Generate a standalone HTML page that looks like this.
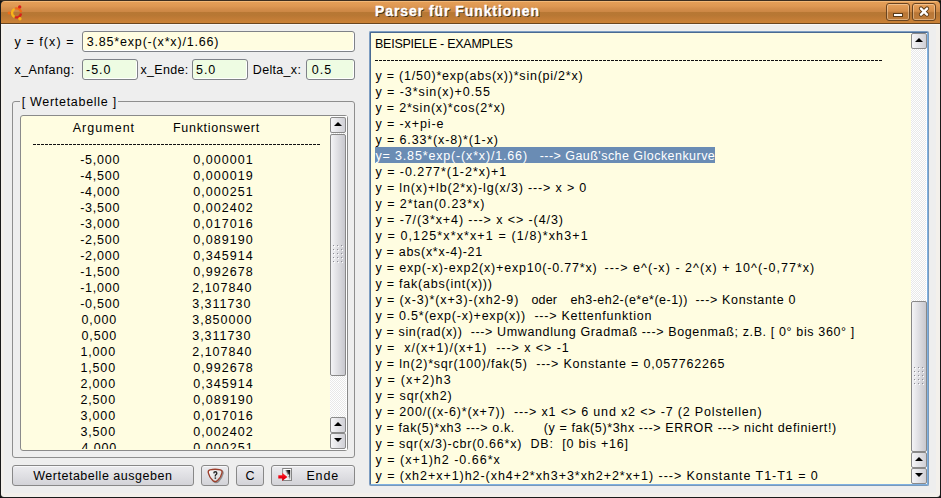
<!DOCTYPE html>
<html><head><meta charset="utf-8">
<style>
*{margin:0;padding:0;box-sizing:border-box}
html,body{width:941px;height:498px;overflow:hidden;background:#111;font-family:"Liberation Sans",sans-serif;font-size:12.5px;color:#000;position:relative}
.a{position:absolute}
.t{position:absolute;white-space:pre;line-height:16px;height:16px}
.tf{position:absolute;border:1px solid #7F8288;border-radius:3px;background:#FFFDE1;box-shadow:inset -1px -1px 0 #fff}
.tfg{background:#EEFCE3}
.btn{position:absolute;border:1px solid #888;border-radius:3px;background:linear-gradient(#ECECEF,#D3D3D8);box-shadow:inset 0 1px 0 #F8F8FA;top:465px;height:21px}
.sbtn{position:absolute;width:16px;height:16px;border:1px solid #8a8a8a;border-radius:2px;background:linear-gradient(90deg,#F6F6F8,#D0D0D6)}
.thumb{position:absolute;width:16px;border:1px solid #888;border-radius:2px;background:linear-gradient(90deg,#F4F4F6 0%,#E2E2E6 40%,#C8C8CE 100%)}
.track{position:absolute;background-color:#FFFFFF;background-image:linear-gradient(45deg,#E8E8E8 25%,transparent 25%,transparent 75%,#E8E8E8 75%),linear-gradient(45deg,#E8E8E8 25%,transparent 25%,transparent 75%,#E8E8E8 75%);background-size:2px 2px;background-position:0 0,1px 1px}
.up,.dn{position:absolute;left:2.5px;width:0;height:0;border-left:4px solid transparent;border-right:4px solid transparent}
.up{top:3.5px;border-bottom:4.5px solid #000}
.dn{top:4px;border-top:4.5px solid #000}
.dash{position:absolute;height:1px;background:repeating-linear-gradient(90deg,#111 0,#111 3px,transparent 3px,transparent 4px)}
</style></head><body>
<!-- window frame -->
<div class="a" style="left:0;top:0;width:941px;height:498px;background:#1a1a1a;border-radius:5px 5px 3px 3px"></div>
<div class="a" style="left:1px;top:24px;width:939px;height:473px;background:#F3F0EB;border-radius:0 0 3px 3px"></div>
<div class="a" style="left:4px;top:25px;width:932px;height:468px;background:#EEEEEE"></div>
<!-- title bar -->
<div class="a" style="left:0;top:0;width:941px;height:1px;background:#3C2E20;border-radius:5px 5px 0 0"></div>
<div class="a" style="left:1px;top:1px;width:939px;height:23px;border-radius:4px 4px 0 0;background:linear-gradient(#F2B878 0px,#F2B878 1px,#E49E57 1px,#DE9853 5px,#D38D4A 8px,#CC8744 11px,#B87834 11px,#B77733 14px,#C27C36 18px,#CB8236 22px,#6A4620 22px,#6A4620 23px)"></div>
<div class="a" style="left:1px;top:24px;width:939px;height:1px;background:#F7F7F7"></div>
<!-- ubuntu logo -->
<svg class="a" style="left:6px;top:3px" width="20" height="20" viewBox="0 0 20 20">
<path d="M8.49 13.87 A4.5 4.5 0 0 1 8.49 5.93" fill="none" stroke="#F8B51A" stroke-width="2.3"/><path d="M9.21 5.62 A4.5 4.5 0 0 1 15.06 9.27" fill="none" stroke="#F06A16" stroke-width="2.3"/><path d="M15.06 10.53 A4.5 4.5 0 0 1 9.21 14.18" fill="none" stroke="#D8201C" stroke-width="2.3"/>
 <circle cx="3.1" cy="9.9" r="1.5" fill="#F26A16"/>
 <circle cx="13.7" cy="3.9" r="1.7" fill="#D8201C"/>
 <circle cx="13.9" cy="15.7" r="1.7" fill="#F8B51A"/>
</svg>
<!-- title buttons -->
<div class="a" style="left:886px;top:3px;width:24px;height:18px;border:1px solid #6A4420;border-radius:3px;background:linear-gradient(#E7A15C,#D58E4A 45%,#B87636 55%,#C07D3A);box-shadow:inset 0 0 0 1px rgba(255,230,200,.45)"></div>
<div class="a" style="left:893px;top:13px;width:10px;height:4px;background:#fff;border:1px solid #5a3a18"></div>
<div class="a" style="left:912px;top:3px;width:24px;height:18px;border:1px solid #6A4420;border-radius:3px;background:linear-gradient(#E7A15C,#D58E4A 45%,#B87636 55%,#C07D3A);box-shadow:inset 0 0 0 1px rgba(255,230,200,.45)"></div>
<svg class="a" style="left:917px;top:5px" width="14" height="14" viewBox="0 0 14 14">
 <path d="M4 3.6 L10 9.6 M10 3.6 L4 9.6" stroke="#5a3a18" stroke-width="4.2" stroke-linecap="round"/>
 <path d="M4 3.6 L10 9.6 M10 3.6 L4 9.6" stroke="#fff" stroke-width="2.4" stroke-linecap="round"/>
</svg>

<!-- input fields -->
<div class="tf" style="left:82px;top:31px;width:273px;height:21px"></div>
<div class="tf tfg" style="left:82px;top:59px;width:56px;height:21px"></div>
<div class="tf tfg" style="left:192px;top:59px;width:56px;height:21px"></div>
<div class="tf tfg" style="left:306px;top:59px;width:49px;height:21px"></div>

<!-- group box -->
<div class="a" style="left:12px;top:101px;width:343px;height:357px;border:1px solid #8e8e8e;border-radius:3px"></div>
<div class="a" style="left:20px;top:95px;width:98px;height:12px;background:#EDEDED"></div>
<!-- table -->
<div class="a" style="left:20px;top:115px;width:328px;height:336px;border:1px solid #8a8a8a;border-radius:3px;background:#FFFDE1;overflow:hidden">
</div>
<div class="a" style="left:330px;top:116px;width:17px;height:334px;background:#fff"></div><div class="track" style="left:330px;top:117px;width:16px;height:332px"></div>
<div class="sbtn" style="left:330px;top:117px"><div class="up"></div></div>
<div class="thumb" style="left:330px;top:134px;height:242px"></div>
<svg class="a" style="left:333px;top:245px" width="11" height="19" viewBox="0 0 11 19"><g id="grip"><rect x="0" y="0" width="1" height="1" fill="#8E8E96"/><rect x="1" y="1" width="1" height="1" fill="#fff"/><rect x="0" y="4" width="1" height="1" fill="#8E8E96"/><rect x="1" y="5" width="1" height="1" fill="#fff"/><rect x="0" y="8" width="1" height="1" fill="#8E8E96"/><rect x="1" y="9" width="1" height="1" fill="#fff"/><rect x="0" y="12" width="1" height="1" fill="#8E8E96"/><rect x="1" y="13" width="1" height="1" fill="#fff"/><rect x="0" y="16" width="1" height="1" fill="#8E8E96"/><rect x="1" y="17" width="1" height="1" fill="#fff"/><rect x="4" y="0" width="1" height="1" fill="#8E8E96"/><rect x="5" y="1" width="1" height="1" fill="#fff"/><rect x="4" y="4" width="1" height="1" fill="#8E8E96"/><rect x="5" y="5" width="1" height="1" fill="#fff"/><rect x="4" y="8" width="1" height="1" fill="#8E8E96"/><rect x="5" y="9" width="1" height="1" fill="#fff"/><rect x="4" y="12" width="1" height="1" fill="#8E8E96"/><rect x="5" y="13" width="1" height="1" fill="#fff"/><rect x="4" y="16" width="1" height="1" fill="#8E8E96"/><rect x="5" y="17" width="1" height="1" fill="#fff"/><rect x="8" y="0" width="1" height="1" fill="#8E8E96"/><rect x="9" y="1" width="1" height="1" fill="#fff"/><rect x="8" y="4" width="1" height="1" fill="#8E8E96"/><rect x="9" y="5" width="1" height="1" fill="#fff"/><rect x="8" y="8" width="1" height="1" fill="#8E8E96"/><rect x="9" y="9" width="1" height="1" fill="#fff"/><rect x="8" y="12" width="1" height="1" fill="#8E8E96"/><rect x="9" y="13" width="1" height="1" fill="#fff"/><rect x="8" y="16" width="1" height="1" fill="#8E8E96"/><rect x="9" y="17" width="1" height="1" fill="#fff"/></g></svg>
<div class="sbtn" style="left:330px;top:417px"><div class="up"></div></div>
<div class="sbtn" style="left:330px;top:433px"><div class="dn"></div></div>
<div class="dash" style="left:33px;top:144px;width:288px"></div>

<!-- buttons -->
<div class="btn" style="left:12px;width:182px"></div>
<div class="btn" style="left:201px;width:28px"></div>
<div class="btn" style="left:236px;width:28px"></div>
<div class="btn" style="left:271px;width:84px"></div>
<!-- help icon -->
<svg class="a" style="left:206px;top:467px" width="18" height="18" viewBox="0 0 18 18">
 <defs><linearGradient id="hg" x1="0" y1="0" x2="1" y2="1"><stop offset="0" stop-color="#ffffff"/><stop offset="1" stop-color="#d2d2d2"/></linearGradient></defs><g transform="translate(0.4,0.8)">
 <path d="M3.5 2 Q8.8 0.8 14 2 Q16.2 2.6 15.6 5 Q14.6 9.5 11.2 12.8 Q8.8 14.8 6.4 12.8 Q3 9.5 1.9 5 Q1.4 2.6 3.5 2 Z" fill="none" stroke="rgba(0,0,0,.35)" stroke-width="1.6" transform="translate(0.9,0.9)"/>
 <path d="M3.5 2 Q8.8 0.8 14 2 Q16.2 2.6 15.6 5 Q14.6 9.5 11.2 12.8 Q8.8 14.8 6.4 12.8 Q3 9.5 1.9 5 Q1.4 2.6 3.5 2 Z" fill="url(#hg)" stroke="#9E402D" stroke-width="1.35"/>
 <path d="M7.4 5.6 Q7.5 4 8.9 4 Q10.4 4 10.4 5.4 Q10.4 6.3 9.5 6.8 Q8.9 7.1 8.9 8.6" fill="none" stroke="#2a2a2a" stroke-width="1.4"/>
 <rect x="8.2" y="9.6" width="1.5" height="1.4" fill="#2a2a2a"/>
</g></svg>
<!-- door icon -->
<svg class="a" style="left:276px;top:467px" width="18" height="16" viewBox="0 0 18 16">
 <defs><linearGradient id="dg" x1="0" y1="0.9" x2="1" y2="0.1"><stop offset="0" stop-color="#ffffff"/><stop offset="0.5" stop-color="#e8e8e8"/><stop offset="0.72" stop-color="#333"/><stop offset="1" stop-color="#000"/></linearGradient>
 <linearGradient id="ag" x1="0" y1="0" x2="0" y2="1"><stop offset="0" stop-color="#FF4040"/><stop offset="0.5" stop-color="#F00010"/><stop offset="1" stop-color="#C8000C"/></linearGradient></defs>
 <rect x="6.7" y="1.5" width="8.8" height="12" fill="#fff" stroke="#858585" stroke-width="1"/>
 <rect x="8.2" y="3" width="6" height="10" fill="url(#dg)"/>
 <rect x="12" y="7.6" width="1.2" height="1.2" fill="#fff"/>
 <path d="M2.3 8.2 L6.2 8.2 L6.2 5.8 L11.4 9.9 L6.2 14.1 L6.2 11.6 L2.3 11.6 Z" fill="url(#ag)"/>
</svg>

<!-- right text area -->
<div class="a" style="left:369px;top:31px;width:560px;height:455px;border:1px solid #7D9DC2;border-right-color:#7799BB;border-bottom-color:#7799BB;border-radius:2px;background:#FFFDE1"><div style="position:absolute;left:0;top:0;right:0;bottom:0;border:1px solid #4A6A92;border-right-color:#80B0E0;border-bottom-color:#80B0E0"></div></div>
<div class="a" style="left:375px;top:147px;width:340px;height:16px;background:#6A8CB4"></div>
<div class="dash" style="left:375px;top:60px;width:508px"></div>
<div class="a" style="left:911px;top:33px;width:16px;height:451px;background:#fff"></div><div class="track" style="left:911px;top:33px;width:15px;height:451px"></div>
<div class="sbtn" style="left:911px;top:33px"><div class="up"></div></div>
<div class="thumb" style="left:911px;top:301px;height:151px"></div>
<svg class="a" style="left:914px;top:367px" width="11" height="19" viewBox="0 0 11 19"><use href="#grip"/></svg>
<div class="sbtn" style="left:911px;top:452px"><div class="up"></div></div>
<div class="sbtn" style="left:911px;top:468px"><div class="dn"></div></div>

<div class="t" style="left:375.00px;top:36px;letter-spacing:-0.242px">BEISPIELE - EXAMPLES</div>
<div class="t" style="left:375.50px;top:68px;letter-spacing:0.773px">y = (1/50)*exp(abs(x))*sin(pi/2*x)</div>
<div class="t" style="left:375.50px;top:84px;letter-spacing:0.929px">y = -3*sin(x)+0.55</div>
<div class="t" style="left:375.50px;top:100px;letter-spacing:0.790px">y = 2*sin(x)*cos(2*x)</div>
<div class="t" style="left:375.50px;top:116px;letter-spacing:0.890px">y = -x+pi-e</div>
<div class="t" style="left:375.50px;top:132px;letter-spacing:0.868px">y = 6.33*(x-8)*(1-x)</div>
<div class="t" style="left:375.50px;top:148px;letter-spacing:0.835px;color:#fff">y= 3.85*exp(-(x*x)/1.66)</div>
<div class="t" style="left:539.70px;top:148px;letter-spacing:0.458px;color:#fff">---&gt; Gauß'sche Glockenkurve</div>
<div class="t" style="left:375.50px;top:164px;letter-spacing:0.958px">y = -0.277*(1-2*x)+1</div>
<div class="t" style="left:375.50px;top:180px;letter-spacing:0.843px">y = ln(x)+lb(2*x)-lg(x/3) ---&gt; x &gt; 0</div>
<div class="t" style="left:375.50px;top:196px;letter-spacing:0.969px">y = 2*tan(0.23*x)</div>
<div class="t" style="left:375.50px;top:212px;letter-spacing:0.910px">y = -7/(3*x+4) ---&gt; x &lt;&gt; -(4/3)</div>
<div class="t" style="left:375.50px;top:228px;letter-spacing:1.117px">y = 0,125*x*x*x+1 = (1/8)*xh3+1</div>
<div class="t" style="left:375.50px;top:244px;letter-spacing:0.700px">y = abs(x*x-4)-21</div>
<div class="t" style="left:375.50px;top:260px;letter-spacing:0.806px">y = exp(-x)-exp2(x)+exp10(-0.77*x)</div>
<div class="t" style="left:604.60px;top:260px;letter-spacing:1.042px">---&gt; e^(-x) - 2^(x) + 10^(-0,77*x)</div>
<div class="t" style="left:375.50px;top:276px;letter-spacing:0.774px">y = fak(abs(int(x)))</div>
<div class="t" style="left:375.50px;top:292px;letter-spacing:0.873px">y = (x-3)*(x+3)-(xh2-9)</div>
<div class="t" style="left:531.50px;top:292px;letter-spacing:0.167px">oder</div>
<div class="t" style="left:570.40px;top:292px;letter-spacing:0.478px">eh3-eh2-(e*e*(e-1))</div>
<div class="t" style="left:695.50px;top:292px;letter-spacing:0.660px">---&gt; Konstante 0</div>
<div class="t" style="left:375.50px;top:308px;letter-spacing:0.768px">y = 0.5*(exp(-x)+exp(x))  ---&gt; Kettenfunktion</div>
<div class="t" style="left:375.50px;top:324px;letter-spacing:0.633px">y = sin(rad(x))  ---&gt; Umwandlung Gradmaß ---&gt; Bogenmaß; z.B. [ 0° bis 360° ]</div>
<div class="t" style="left:375.50px;top:340px;letter-spacing:0.948px">y =  x/(x+1)/(x+1)  ---&gt; x &lt;&gt; -1</div>
<div class="t" style="left:375.50px;top:356px;letter-spacing:0.793px">y = ln(2)*sqr(100)/fak(5)  ---&gt; Konstante = 0,057762265</div>
<div class="t" style="left:375.50px;top:372px;letter-spacing:1.190px">y = (x+2)h3</div>
<div class="t" style="left:375.50px;top:388px;letter-spacing:0.891px">y = sqr(xh2)</div>
<div class="t" style="left:375.50px;top:404px;letter-spacing:0.831px">y = 200/((x-6)*(x+7))  ---&gt; x1 &lt;&gt; 6 und x2 &lt;&gt; -7 (2 Polstellen)</div>
<div class="t" style="left:375.50px;top:420px;letter-spacing:0.630px">y = fak(5)*xh3 ---&gt; o.k.       (y = fak(5)*3hx ---&gt; ERROR ---&gt; nicht definiert!)</div>
<div class="t" style="left:375.50px;top:436px;letter-spacing:0.768px">y = sqr(x/3)-cbr(0.66*x)  DB:  [0 bis +16]</div>
<div class="t" style="left:375.50px;top:452px;letter-spacing:1.000px">y = (x+1)h2 -0.66*x</div>
<div class="t" style="left:375.50px;top:468px;letter-spacing:0.952px">y = (xh2+x+1)h2-(xh4+2*xh3+3*xh2+2*x+1) ---&gt; Konstante T1-T1 = 0</div>
<div class="t" style="left:14.50px;top:34px;letter-spacing:1.078px">y = f(x) =</div>
<div class="t" style="left:86.70px;top:34px;letter-spacing:0.825px">3.85*exp(-(x*x)/1.66)</div>
<div class="t" style="left:14.50px;top:62px;letter-spacing:0.425px">x_Anfang:</div>
<div class="t" style="left:86.00px;top:62px;letter-spacing:1.000px">-5.0</div>
<div class="t" style="left:140.40px;top:62px;letter-spacing:0.317px">x_Ende:</div>
<div class="t" style="left:196.00px;top:62px;letter-spacing:0.960px">5.0</div>
<div class="t" style="left:252.80px;top:62px;letter-spacing:0.314px">Delta_x:</div>
<div class="t" style="left:311.80px;top:62px;letter-spacing:1.020px">0.5</div>
<div class="t" style="left:21.70px;top:94px;letter-spacing:0.707px">[ Wertetabelle ]</div>
<div class="t" style="left:72.70px;top:120px;letter-spacing:1.029px">Argument</div>
<div class="t" style="left:173.00px;top:120px;letter-spacing:0.700px">Funktionswert</div>
<div class="t" style="left:80.20px;top:152px;letter-spacing:0.748px">-5,000</div>
<div class="t" style="left:193.20px;top:152px;letter-spacing:1.040px">0,000001</div>
<div class="t" style="left:80.20px;top:168px;letter-spacing:0.748px">-4,500</div>
<div class="t" style="left:193.20px;top:168px;letter-spacing:1.040px">0,000019</div>
<div class="t" style="left:80.20px;top:184px;letter-spacing:0.748px">-4,000</div>
<div class="t" style="left:193.20px;top:184px;letter-spacing:1.040px">0,000251</div>
<div class="t" style="left:80.20px;top:200px;letter-spacing:0.748px">-3,500</div>
<div class="t" style="left:193.20px;top:200px;letter-spacing:1.040px">0,002402</div>
<div class="t" style="left:80.20px;top:216px;letter-spacing:0.748px">-3,000</div>
<div class="t" style="left:193.20px;top:216px;letter-spacing:1.040px">0,017016</div>
<div class="t" style="left:80.20px;top:232px;letter-spacing:0.748px">-2,500</div>
<div class="t" style="left:193.20px;top:232px;letter-spacing:1.040px">0,089190</div>
<div class="t" style="left:80.20px;top:248px;letter-spacing:0.748px">-2,000</div>
<div class="t" style="left:193.20px;top:248px;letter-spacing:1.040px">0,345914</div>
<div class="t" style="left:80.20px;top:264px;letter-spacing:0.748px">-1,500</div>
<div class="t" style="left:193.20px;top:264px;letter-spacing:1.040px">0,992678</div>
<div class="t" style="left:80.20px;top:280px;letter-spacing:0.748px">-1,000</div>
<div class="t" style="left:192.20px;top:280px;letter-spacing:1.020px">2,107840</div>
<div class="t" style="left:80.20px;top:296px;letter-spacing:0.748px">-0,500</div>
<div class="t" style="left:192.20px;top:296px;letter-spacing:1.000px">3,311730</div>
<div class="t" style="left:81.50px;top:312px;letter-spacing:0.853px">0,000</div>
<div class="t" style="left:192.20px;top:312px;letter-spacing:1.020px">3,850000</div>
<div class="t" style="left:81.50px;top:328px;letter-spacing:0.853px">0,500</div>
<div class="t" style="left:192.20px;top:328px;letter-spacing:1.000px">3,311730</div>
<div class="t" style="left:80.50px;top:344px;letter-spacing:0.825px">1,000</div>
<div class="t" style="left:192.20px;top:344px;letter-spacing:1.020px">2,107840</div>
<div class="t" style="left:80.50px;top:360px;letter-spacing:0.825px">1,500</div>
<div class="t" style="left:193.20px;top:360px;letter-spacing:1.040px">0,992678</div>
<div class="t" style="left:80.50px;top:376px;letter-spacing:0.825px">2,000</div>
<div class="t" style="left:193.20px;top:376px;letter-spacing:1.040px">0,345914</div>
<div class="t" style="left:80.50px;top:392px;letter-spacing:0.825px">2,500</div>
<div class="t" style="left:193.20px;top:392px;letter-spacing:1.040px">0,089190</div>
<div class="t" style="left:80.50px;top:408px;letter-spacing:0.825px">3,000</div>
<div class="t" style="left:193.20px;top:408px;letter-spacing:1.040px">0,017016</div>
<div class="t" style="left:80.50px;top:424px;letter-spacing:0.825px">3,500</div>
<div class="t" style="left:193.20px;top:424px;letter-spacing:1.040px">0,002402</div>
<div class="t" style="left:81.50px;top:440px;letter-spacing:0.853px;clip-path:inset(0 0 7px 0)">4,000</div>
<div class="t" style="left:193.20px;top:440px;letter-spacing:1.040px;clip-path:inset(0 0 7px 0)">0,000251</div>
<div class="t" style="left:33.20px;top:468px;letter-spacing:0.520px">Wertetabelle ausgeben</div>
<div class="t" style="left:245.40px;top:468px;letter-spacing:0.600px">C</div>
<div class="t" style="left:306.40px;top:468px;letter-spacing:0.867px">Ende</div>
<div class="t" style="left:375.00px;top:3px;letter-spacing:0.925px;font-size:14px;font-weight:bold;color:#fff;text-shadow:1px 1px 0 rgba(40,25,10,.9);-webkit-text-stroke:0.35px #fff">Parser für Funktionen</div>
</body></html>
